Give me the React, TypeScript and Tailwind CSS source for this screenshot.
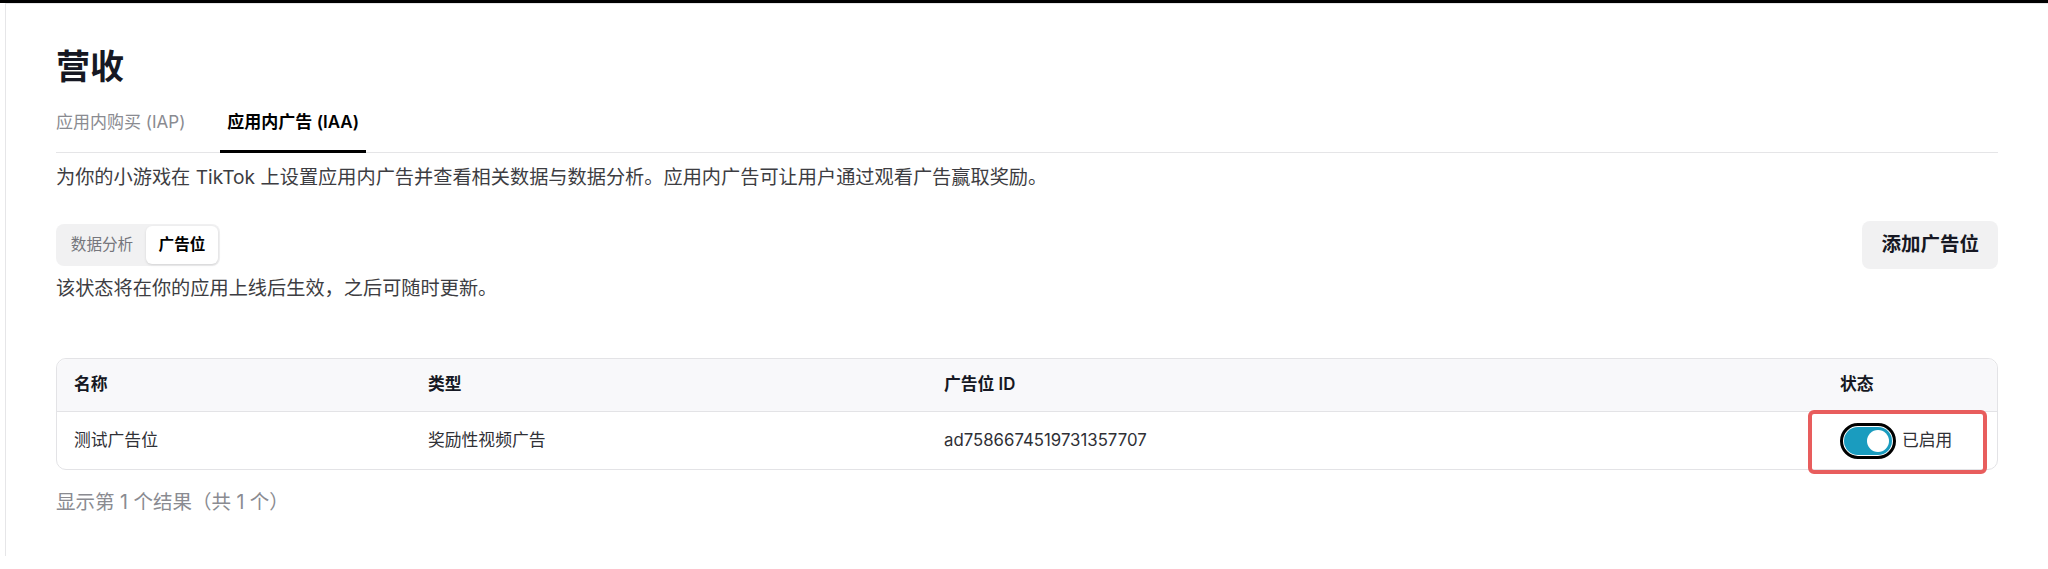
import { useState } from 'react';

const columns = ['名称', '类型', '广告位 ID', '状态'];

const rows = [
  { name: '测试广告位', type: '奖励性视频广告', id: 'ad7586674519731357707', enabled: true },
];

function Toggle({ on }: { on: boolean }) {
  return (
    <span className="inline-flex h-[36px] w-[56px] rounded-full border-[3px] border-black bg-white p-[1px]">
      <span
        className={
          on
            ? 'flex h-full w-full items-center justify-end rounded-full bg-[#1a9cbf] pr-[3px]'
            : 'flex h-full w-full items-center justify-start rounded-full bg-[#d4d4d8] pl-[3px]'
        }
      >
        <span className="h-[22px] w-[22px] rounded-full bg-white" />
      </span>
    </span>
  );
}

export default function App() {
  const [tab, setTab] = useState<'iap' | 'iaa'>('iaa');
  const [view, setView] = useState<'data' | 'slots'>('slots');

  return (
    <div className="min-h-screen bg-white font-['Inter','Noto_Sans_CJK_SC',sans-serif] text-[#161823]">
      <div className="h-[3px] bg-black" />
      <div className="ml-[5px] border-l border-t border-[#e6e6e8] px-[50px] pt-[41px] pb-10">
        <h1 className="text-[34px] font-bold leading-[44px]">营收</h1>

        <div className="mt-[21px] flex border-b border-[#e5e5e7]">
          <button
            onClick={() => setTab('iap')}
            className={
              tab === 'iap'
                ? '-mb-px border-b-[3px] border-black pb-[16px] text-[17px] font-semibold leading-[24px] text-black'
                : '-mb-px border-b-[3px] border-transparent pb-[16px] text-[17px] leading-[24px] text-[#8a8b91]'
            }
          >
            应用内购买 (IAP)
          </button>
          <button
            onClick={() => setTab('iaa')}
            className={
              tab === 'iaa'
                ? '-mb-px ml-[35px] border-b-[3px] border-black px-[7px] pb-[16px] text-[17px] font-semibold leading-[24px] text-black'
                : '-mb-px ml-[35px] border-b-[3px] border-transparent px-[7px] pb-[16px] text-[17px] leading-[24px] text-[#8a8b91]'
            }
          >
            应用内广告 (IAA)
          </button>
        </div>

        <p className="mt-[10px] text-[19.2px] leading-[28px] text-[#3d3d42]">
          为你的小游戏在 TikTok 上设置应用内广告并查看相关数据与数据分析。应用内广告可让用户通过观看广告赢取奖励。
        </p>

        <div className="mt-[30px] flex items-start justify-between">
          <div>
            <div className="mt-[3px] inline-flex rounded-[8px] bg-[#f1f1f2] p-[2px]">
              <button
                onClick={() => setView('data')}
                className={
                  view === 'data'
                    ? 'h-[38px] w-[88px] rounded-[6px] bg-white text-[15.6px] font-semibold text-black shadow-sm'
                    : 'h-[38px] w-[88px] rounded-[6px] text-[15.6px] text-[#75767c]'
                }
              >
                数据分析
              </button>
              <button
                onClick={() => setView('slots')}
                className={
                  view === 'slots'
                    ? 'h-[38px] w-[72px] rounded-[6px] bg-white text-[15.6px] font-semibold text-black shadow-sm'
                    : 'h-[38px] w-[72px] rounded-[6px] text-[15.6px] text-[#75767c]'
                }
              >
                广告位
              </button>
            </div>
            <p className="mt-[8px] text-[19.2px] leading-[28px] text-[#3d3d42]">该状态将在你的应用上线后生效，之后可随时更新。</p>
          </div>
          <button className="h-[48px] rounded-[8px] bg-[#f1f1f2] px-[19px] text-[19.5px] font-semibold text-[#161823]">
            添加广告位
          </button>
        </div>

        <div className="mt-[56px] rounded-[10px] border border-[#e3e3e6]">
          <div className="grid h-[53px] grid-cols-[354px_516px_1fr_174px] items-center rounded-t-[10px] border-b border-[#e3e3e6] bg-[#f8f8fa]">
            {columns.map((c) => (
              <div key={c} className="px-[17px] text-[16.8px] font-semibold text-[#161823]">
                {c}
              </div>
            ))}
          </div>
          {rows.map((r) => (
            <div key={r.id} className="grid h-[57px] grid-cols-[354px_516px_1fr_174px] items-center text-[16.8px] text-[#2f3036]">
              <div className="px-[17px]">{r.name}</div>
              <div className="px-[17px]">{r.type}</div>
              <div className="px-[17px]">{r.id}</div>
              <div className="relative flex h-full items-center gap-[6px] px-[17px]">
                <Toggle on={r.enabled} />
                <span>{r.enabled ? '已启用' : '已停用'}</span>
                <div className="pointer-events-none absolute left-[-15px] top-[-2px] h-[64px] w-[179px] rounded-[6px] border-[4px] border-[#e85d5d]" />
              </div>
            </div>
          ))}
        </div>

        <p className="mt-[18px] text-[19.5px] leading-[28px] text-[#8a8b91]">显示第 1 个结果（共 1 个）</p>
      </div>
    </div>
  );
}
